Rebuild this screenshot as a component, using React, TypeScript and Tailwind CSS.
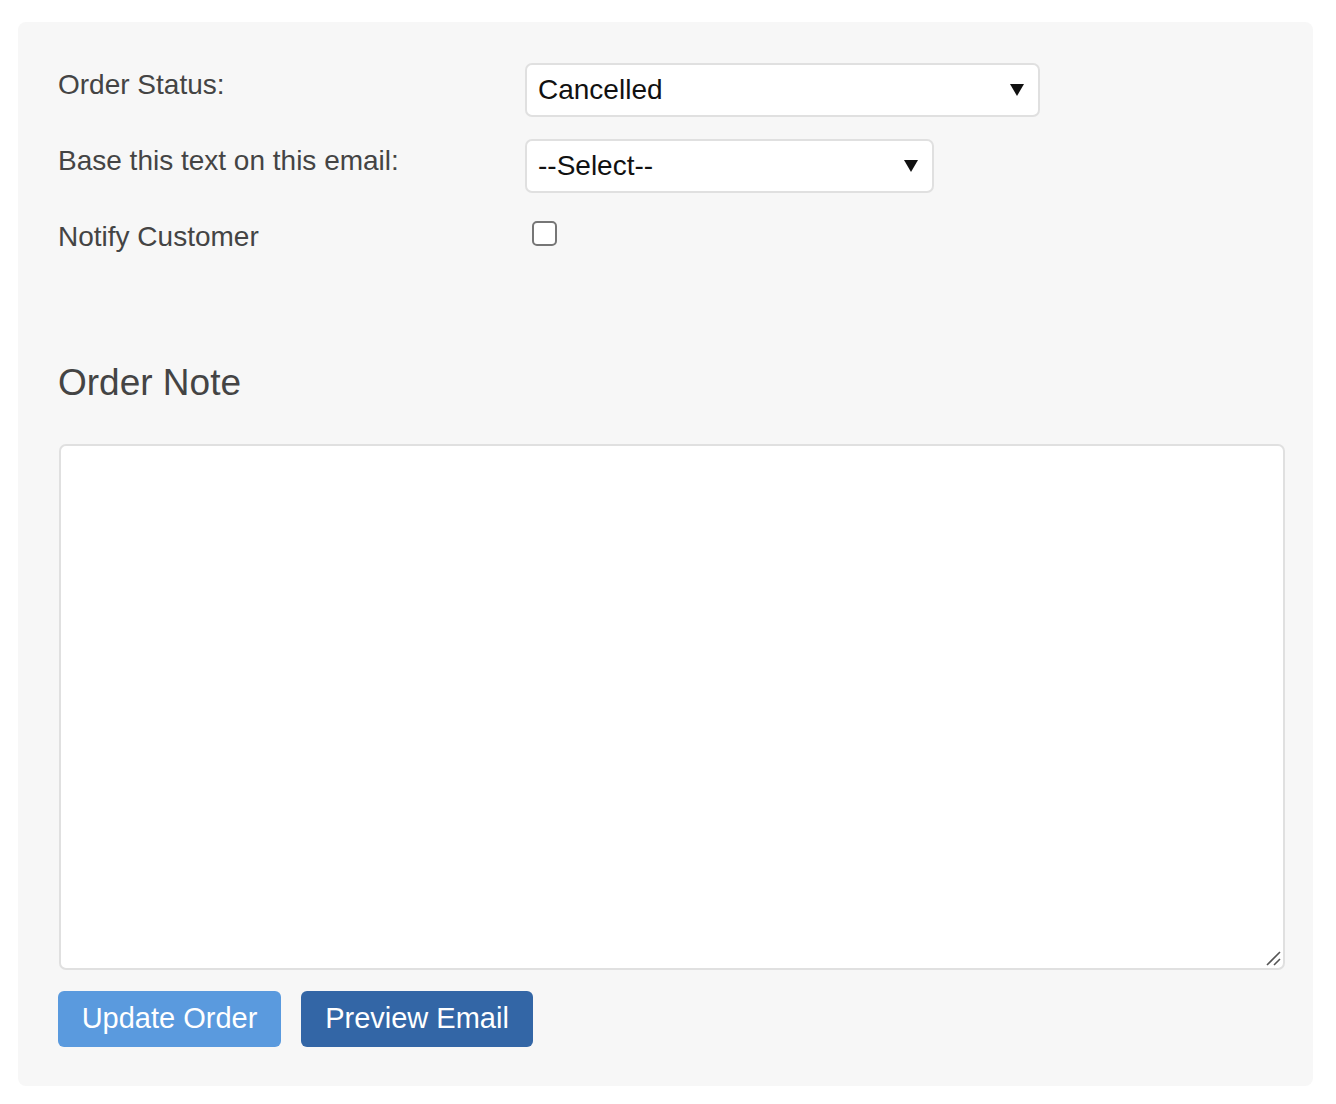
import React from 'react';

const SelectBox = ({ value, width }: { value: string; width: string }) => (
  <div className={`relative ${width}`}>
    <select
      defaultValue={value}
      className="w-full h-[54px] appearance-none bg-white border-2 border-[#e0e0e0] rounded-[7px] pl-[11px] pr-[40px] text-[28px] text-[#111] outline-none"
    >
      <option>{value}</option>
    </select>
    <svg
      className="absolute right-[16px] top-[21px] pointer-events-none"
      width="14"
      height="12"
      viewBox="0 0 14 12"
    >
      <path d="M0 0 H14 L7 12 Z" fill="#111" />
    </svg>
  </div>
);

export default function App() {
  return (
    <div
      className="min-h-screen bg-white pt-[22px] pl-[18px] pr-[23px] pb-[18px]"
      style={{ fontFamily: '"Liberation Sans", Arial, sans-serif' }}
    >
      <div className="bg-[#f7f7f7] rounded-[8px] pt-[41px] pb-[39px] pl-[40px] pr-[28px]">
        <div className="flex flex-col gap-[22px]">
          <div className="flex items-start">
            <label className="w-[467px] pt-[5px] text-[28px] leading-[34px] text-[#444]">Order Status:</label>
            <SelectBox value="Cancelled" width="w-[515px]" />
          </div>
          <div className="flex items-start">
            <label className="w-[467px] pt-[5px] text-[28px] leading-[34px] text-[#444]">Base this text on this email:</label>
            <SelectBox value="--Select--" width="w-[409px]" />
          </div>
          <div className="flex items-start">
            <label className="w-[467px] pt-[5px] text-[28px] leading-[34px] text-[#444]">Notify Customer</label>
            <input
              type="checkbox"
              className="appearance-none mt-[6px] ml-[7px] w-[25px] h-[25px] bg-white border-2 border-[#767676] rounded-[5px]"
            />
          </div>
        </div>

        <h2 className="mt-[109px] text-[37px] leading-[40px] text-[#444]">Order Note</h2>

        {/* note field, handle drawn on top */}
        <div className="relative mt-[41px] ml-[1px]">
          <textarea className="block w-full h-[526px] bg-white border-2 border-[#e0e0e0] rounded-[7px] outline-none p-3 text-[28px] resize-none" />
          <svg
            className="absolute right-[4px] bottom-[4px] pointer-events-none"
            width="16"
            height="16"
            viewBox="0 0 16 16"
          >
            <path d="M2 15 L15 2 M9 15 L15 9" stroke="#555" strokeWidth="1.6" />
          </svg>
        </div>

        <div className="flex gap-[20px] mt-[21px]">
          <button className="w-[223px] h-[56px] rounded-[6px] bg-[#5a9ade] text-white text-[29px]">
            Update Order
          </button>
          <button className="w-[232px] h-[56px] rounded-[6px] bg-[#3366a6] text-white text-[29px]">
            Preview Email
          </button>
        </div>
      </div>
    </div>
  );
}
